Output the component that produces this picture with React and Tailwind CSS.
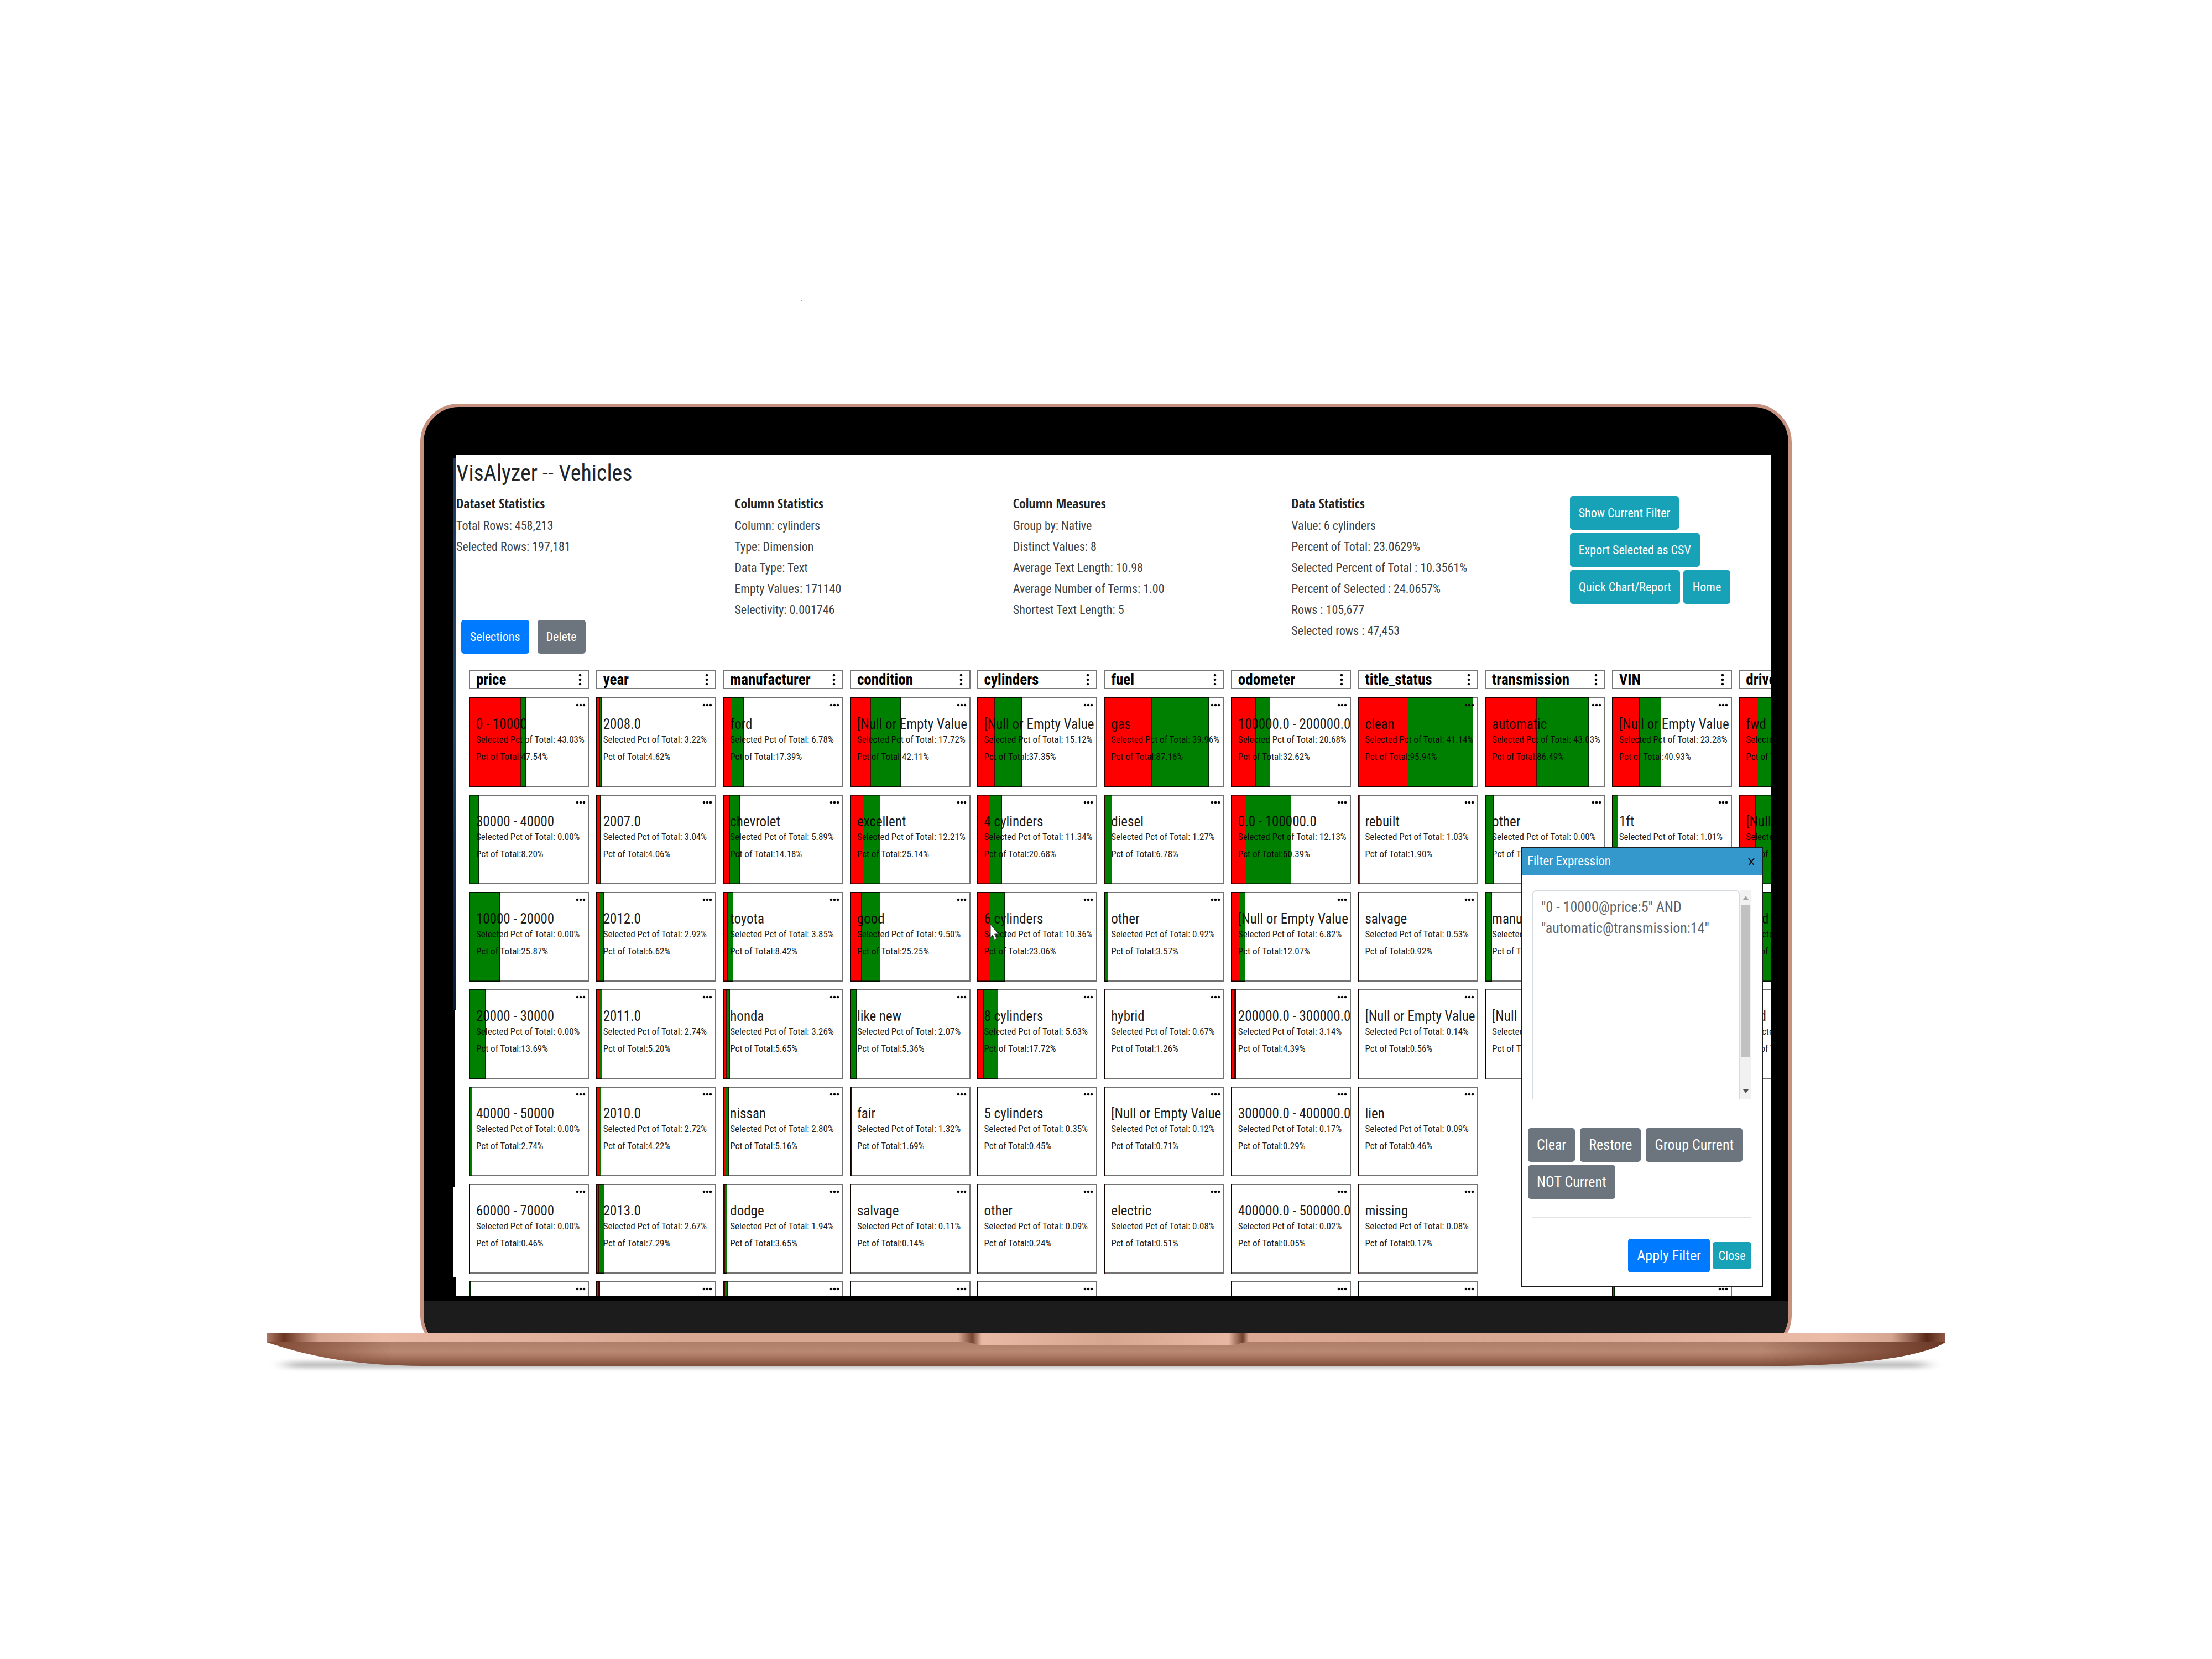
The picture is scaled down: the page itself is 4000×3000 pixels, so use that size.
import React from "react";

const NULL_NAME = "[Null or Empty Value";

// Each card: [value, selected share of total, share of total]
const columns = [
  {
    name: "price",
    cards: [
      ["0 - 10000", "43.03", "47.54"],
      ["30000 - 40000", "0.00", "8.20"],
      ["10000 - 20000", "0.00", "25.87"],
      ["20000 - 30000", "0.00", "13.69"],
      ["40000 - 50000", "0.00", "2.74"],
      ["60000 - 70000", "0.00", "0.46"],
      ["", "0.00", "1.30"],
    ],
  },
  {
    name: "year",
    cards: [
      ["2008.0", "3.22", "4.62"],
      ["2007.0", "3.04", "4.06"],
      ["2012.0", "2.92", "6.62"],
      ["2011.0", "2.74", "5.20"],
      ["2010.0", "2.72", "4.22"],
      ["2013.0", "2.67", "7.29"],
      ["", "2.60", "3.40"],
    ],
  },
  {
    name: "manufacturer",
    cards: [
      ["ford", "6.78", "17.39"],
      ["chevrolet", "5.89", "14.18"],
      ["toyota", "3.85", "8.42"],
      ["honda", "3.26", "5.65"],
      ["nissan", "2.80", "5.16"],
      ["dodge", "1.94", "3.65"],
      ["", "1.70", "4.10"],
    ],
  },
  {
    name: "condition",
    cards: [
      [NULL_NAME, "17.72", "42.11"],
      ["excellent", "12.21", "25.14"],
      ["good", "9.50", "25.25"],
      ["like new", "2.07", "5.36"],
      ["fair", "1.32", "1.69"],
      ["salvage", "0.11", "0.14"],
      ["", "0.00", "0.10"],
    ],
  },
  {
    name: "cylinders",
    cards: [
      [NULL_NAME, "15.12", "37.35"],
      ["4 cylinders", "11.34", "20.68"],
      ["6 cylinders", "10.36", "23.06"],
      ["8 cylinders", "5.63", "17.72"],
      ["5 cylinders", "0.35", "0.45"],
      ["other", "0.09", "0.24"],
      ["", "0.00", "0.10"],
    ],
  },
  {
    name: "fuel",
    cards: [
      ["gas", "39.96", "87.16"],
      ["diesel", "1.27", "6.78"],
      ["other", "0.92", "3.57"],
      ["hybrid", "0.67", "1.26"],
      [NULL_NAME, "0.12", "0.71"],
      ["electric", "0.08", "0.51"],
    ],
  },
  {
    name: "odometer",
    cards: [
      ["100000.0 - 200000.0", "20.68", "32.62"],
      ["0.0 - 100000.0", "12.13", "50.39"],
      [NULL_NAME, "6.82", "12.07"],
      ["200000.0 - 300000.0", "3.14", "4.39"],
      ["300000.0 - 400000.0", "0.17", "0.29"],
      ["400000.0 - 500000.0", "0.02", "0.05"],
      ["", "0.00", "0.03"],
    ],
  },
  {
    name: "title_status",
    cards: [
      ["clean", "41.14", "95.94"],
      ["rebuilt", "1.03", "1.90"],
      ["salvage", "0.53", "0.92"],
      [NULL_NAME, "0.14", "0.56"],
      ["lien", "0.09", "0.46"],
      ["missing", "0.08", "0.17"],
      ["", "0.00", "0.10"],
    ],
  },
  {
    name: "transmission",
    cards: [
      ["automatic", "43.03", "86.49"],
      ["other", "0.00", "7.20"],
      ["manual", "0.00", "6.10"],
      [NULL_NAME, "0.00", "0.21"],
    ],
  },
  {
    name: "VIN",
    cards: [
      [NULL_NAME, "23.28", "40.93"],
      ["1ft", "1.01", "5.20"],
      ["", "0.90", "2.90"],
      ["", "0.80", "2.80"],
      ["", "0.70", "2.70"],
      ["", "0.60", "2.60"],
      ["", "0.40", "2.60"],
    ],
  },
  {
    name: "drive",
    cards: [
      ["fwd", "15.50", "27.40"],
      [NULL_NAME, "14.20", "31.00"],
      ["4wd", "9.00", "32.00"],
      ["rwd", "4.00", "9.00"],
    ],
  },
];

const stats = [
  ["Dataset Statistics", ["Total Rows: 458,213", "Selected Rows: 197,181"]],
  [
    "Column Statistics",
    ["Column: cylinders", "Type: Dimension", "Data Type: Text", "Empty Values: 171140", "Selectivity: 0.001746"],
  ],
  [
    "Column Measures",
    [
      "Group by: Native",
      "Distinct Values: 8",
      "Average Text Length: 10.98",
      "Average Number of Terms: 1.00",
      "Shortest Text Length: 5",
    ],
  ],
  [
    "Data Statistics",
    [
      "Value: 6 cylinders",
      "Percent of Total: 23.0629%",
      "Selected Percent of Total : 10.3561%",
      "Percent of Selected : 24.0657%",
      "Rows : 105,677",
      "Selected rows : 47,453",
    ],
  ],
];

function Button({ className, children }) {
  return (
    <button type="button" className={"rounded-[5px] px-4 text-white whitespace-nowrap " + className}>
      {children}
    </button>
  );
}

function Stat({ title, lines, children }) {
  return (
    <section className="flex flex-col">
      <h2 className="mb-[3px] font-['Open_Sans_Condensed','Open_Sans',sans-serif] text-[24px] leading-[38px] font-bold text-[#212529]">
        {title}
      </h2>
      <ul className="text-[22px] leading-[38px] whitespace-nowrap text-[#3d4247]">
        {lines.map((l) => (
          <li key={l}>{l}</li>
        ))}
      </ul>
      {children}
    </section>
  );
}

function Pointer() {
  return (
    <svg className="absolute left-[23px] top-[57px] h-[32px] w-[16px]" viewBox="0 0 16 32" aria-hidden="true">
      <path
        d="M1 1 V26 L5 20.5 L8.5 29.5 L12 27.5 L8.7 19 H15 Z"
        fill="#fff"
        stroke="#333"
        strokeWidth="1"
      />
    </svg>
  );
}

function Card({ card, pointer }) {
  const [name, selected, total] = card;
  return (
    <article className="relative h-[162px] overflow-hidden whitespace-nowrap bg-white">
      <div
        className="absolute inset-y-0 left-0 border border-black/70 bg-[#008000]"
        style={{ width: total + "%" }}
      />
      {Number(selected) > 0 && (
        <div
          className="absolute inset-y-0 left-0 border border-black/70 bg-[#ff0000]"
          style={{ width: selected + "%" }}
        />
      )}
      <div className="absolute inset-0 border-2 border-black/55 border-l-black/80" />
      <button type="button" aria-label="Card menu" className="absolute right-[7px] top-[11px]">
        <svg className="h-[6px] w-[18px]" viewBox="0 0 18 6" aria-hidden="true">
          <circle cx="3" cy="3" r="2.3" />
          <circle cx="9" cy="3" r="2.3" />
          <circle cx="15" cy="3" r="2.3" />
        </svg>
      </button>
      {name && (
        <div className="relative pl-[13px] pt-[37px] text-black/90">
          <h4 className="text-[25px] leading-[24px]">{name}</h4>
          <p className="text-[17px] leading-[31px]">Selected Pct of Total: {selected}%</p>
          <p className="text-[17px] leading-[31px]">Pct of Total:{total}%</p>
        </div>
      )}
      {pointer && <Pointer />}
    </article>
  );
}

function Column({ column }) {
  return (
    <section className="flex min-w-0 flex-col gap-[14px]">
      <header className="mb-px flex h-[34px] items-center justify-between border-2 border-[#777] pl-[11px] pr-[12px]">
        <h3 className="text-[27px] leading-[30px] font-bold text-black">{column.name}</h3>
        <button type="button" aria-label={column.name + " menu"}>
          <svg className="h-[24px] w-[6px]" viewBox="0 0 6 24" aria-hidden="true">
            <circle cx="3" cy="4" r="2.3" />
            <circle cx="3" cy="12" r="2.3" />
            <circle cx="3" cy="20" r="2.3" />
          </svg>
        </button>
      </header>
      {column.cards.map((c, i) => (
        <Card key={i} card={c} pointer={c[0] === "6 cylinders"} />
      ))}
    </section>
  );
}

function FilterDialog() {
  return (
    <div
      role="dialog"
      aria-labelledby="filter-title"
      className="absolute bottom-[15px] right-[15px] flex w-[437px] flex-col border-2 border-[#1c1c1c] bg-white"
    >
      <header className="flex h-[50px] items-center justify-between bg-[#3498cd] pl-[9px] pr-[13px]">
        <h2 id="filter-title" className="text-[23px] leading-[46px] text-white">
          Filter Expression
        </h2>
        <button type="button" aria-label="Close dialog">
          <svg className="h-[15px] w-[12px]" viewBox="0 0 12 15" fill="none" stroke="#111" strokeWidth="2" aria-hidden="true">
            <path d="M1 1 L11 14 M11 1 L1 14" />
          </svg>
        </button>
      </header>
      <div className="ml-[18px] mr-[19px] mt-[27px] flex h-[377px]">
        <textarea
          aria-label="Filter expression"
          className="block min-w-0 flex-1 resize-none overflow-hidden rounded-t-[6px] border-2 border-b-0 border-[#d5dbe1] px-[14px] pt-[9px] text-[26px] leading-[38px] text-[#5c646c] outline-none"
          defaultValue={'"0 - 10000@price:5" AND\n"automatic@transmission:14"'}
        />
        <div className="flex w-[21px] flex-col items-center justify-between bg-[#f1f1f1] py-[10px]" aria-hidden="true">
          <svg className="h-[7px] w-[10px]" viewBox="0 0 10 7">
            <path d="M0 7 L5 0 L10 7 Z" fill="#a3a3a3" />
          </svg>
          <div className="mb-[59px] mt-[9px] w-[17px] flex-1 bg-[#c1c1c1]" />
          <svg className="h-[7px] w-[10px]" viewBox="0 0 10 7">
            <path d="M0 0 L5 7 L10 0 Z" fill="#505050" />
          </svg>
        </div>
      </div>
      <div className="mt-[53px] flex flex-wrap gap-x-[9px] gap-y-[6px] pl-[10px] pr-[20px]">
        <Button className="h-[61px] bg-[#6c757d] text-[26px]">Clear</Button>
        <Button className="h-[61px] bg-[#6c757d] text-[26px]">Restore</Button>
        <Button className="h-[61px] bg-[#6c757d] text-[26px]">Group Current</Button>
        <Button className="h-[61px] bg-[#6c757d] text-[26px]">NOT Current</Button>
      </div>
      <hr className="ml-[18px] mr-[19px] mt-[32px] border-t-2 border-[#e3e3e3]" />
      <footer className="mb-[25px] mr-[19px] mt-[38px] flex items-center justify-end gap-[5px]">
        <Button className="h-[61px] bg-[#007bff] text-[26px]">Apply Filter</Button>
        <button type="button" className="h-[49px] w-[70px] rounded-[5px] bg-[#17a2b8] text-[22px] text-white">
          Close
        </button>
      </footer>
    </div>
  );
}

function Screen() {
  return (
    <main className="relative aspect-[2378/1520] min-w-0 flex-1 overflow-hidden bg-white font-['Roboto_Condensed','Liberation_Sans',sans-serif]">
      <h1 className="mb-[2px] text-[40px] leading-[66px] text-[#212529]">VisAlyzer -- Vehicles</h1>
      <div className="grid min-h-[291px] grid-cols-[repeat(4,21.17%)_1fr]">
        {stats.map(([title, lines], i) => (
          <Stat key={title} title={title} lines={lines}>
            {i === 0 && (
              <div className="mt-auto flex gap-[15px] pl-[9px]">
                <Button className="h-[61px] bg-[#007bff] text-[22px]">Selections</Button>
                <Button className="h-[61px] bg-[#6c757d] text-[22px]">Delete</Button>
              </div>
            )}
          </Stat>
        ))}
        <div className="flex flex-wrap content-start gap-x-[6px] gap-y-[6px] pt-[6px]">
          <div className="w-full">
            <Button className="h-[61px] bg-[#17a2b8] text-[22px]">Show Current Filter</Button>
          </div>
          <div className="w-full">
            <Button className="h-[61px] bg-[#17a2b8] text-[22px]">Export Selected as CSV</Button>
          </div>
          <Button className="h-[61px] bg-[#17a2b8] text-[22px]">Quick Chart/Report</Button>
          <Button className="h-[61px] min-w-[85px] bg-[#17a2b8] text-[22px]">Home</Button>
        </div>
      </div>
      <div className="ml-[23px] mr-[-159px] mt-[30px] grid grid-cols-11 items-start gap-x-3">
        {columns.map((c) => (
          <Column key={c.name} column={c} />
        ))}
      </div>
      <FilterDialog />
    </main>
  );
}

function Base() {
  return (
    <svg className="relative block w-full" viewBox="0 0 3036 90" aria-hidden="true">
      <defs>
        <linearGradient id="body" x1="0" y1="0" x2="0" y2="1">
          <stop offset="0" stopColor="#b07e6a" />
          <stop offset=".4" stopColor="#b98974" />
          <stop offset=".6" stopColor="#ab7762" />
          <stop offset="1" stopColor="#7f4f3b" />
        </linearGradient>
        <linearGradient id="ends" gradientUnits="userSpaceOnUse" x1="0" y1="0" x2="3036" y2="0">
          <stop offset="0" stopColor="#7a432d" stopOpacity=".9" />
          <stop offset=".075" stopColor="#7a432d" stopOpacity="0" />
          <stop offset=".89" stopColor="#6b3825" stopOpacity="0" />
          <stop offset="1" stopColor="#6b3825" stopOpacity="1" />
        </linearGradient>
        <linearGradient id="top" gradientUnits="userSpaceOnUse" x1="0" y1="0" x2="3036" y2="0">
          <stop offset="0" stopColor="#ad7966" />
          <stop offset=".0105" stopColor="#693421" />
          <stop offset=".031" stopColor="#d5a592" />
          <stop offset=".07" stopColor="#ebbba8" />
          <stop offset=".25" stopColor="#d9a893" />
          <stop offset=".412" stopColor="#d9a893" />
          <stop offset=".4203" stopColor="#754330" />
          <stop offset=".426" stopColor="#eab9a6" />
          <stop offset=".5" stopColor="#d7a690" />
          <stop offset=".573" stopColor="#e8b7a3" />
          <stop offset=".5815" stopColor="#70402d" />
          <stop offset=".585" stopColor="#dba994" />
          <stop offset=".75" stopColor="#d9a893" />
          <stop offset=".93" stopColor="#ebbba8" />
          <stop offset=".968" stopColor="#d5a592" />
          <stop offset=".989" stopColor="#592817" />
          <stop offset="1" stopColor="#8f5a47" />
        </linearGradient>
        <filter id="soft" x="-5%" y="-200%" width="110%" height="500%">
          <feGaussianBlur stdDeviation="16 4" />
        </filter>
      </defs>
      <rect x="36" y="53" width="2964" height="10" fill="#000" opacity=".3" filter="url(#soft)" />
      <path d="M0 17 C70 40 150 60 290 60 H2721 C2880 60 3000 42 3036 17 Z" fill="url(#body)" />
      <path d="M0 17 C70 40 150 60 290 60 H2721 C2880 60 3000 42 3036 17 Z" fill="url(#ends)" />
      <path
        d="M0 0 H3036 V17 H1778 C1758 17 1756 23 1742 23 H1293 C1281 23 1279 17 1262 17 H0 Z"
        fill="url(#top)"
      />
      <path d="M0 16.5 H1262 M1778 16.5 H3036" stroke="#b98873" strokeWidth="1" />
    </svg>
  );
}

export default function App() {
  return (
    <div className="min-h-screen bg-white">
      <div className="h-[730px] pl-[36.2%] pt-[542px]">
        <div className="h-[3px] w-[3px] rounded-full bg-[#999]" />
      </div>
      <div className="mx-auto -mb-[38px] w-[62%] overflow-hidden rounded-[70px] border-6 border-[#c6917f] bg-black pt-[87px]">
        <div className="flex pl-[54px] pr-[31px]">
          <div className="flex w-[5px] flex-col items-end pt-[5px]" aria-hidden="true">
            <div className="w-full flex-[999] bg-gradient-to-b from-[#1c3a5e] via-[#234a6b] to-[#071a35]" />
            <div className="w-[3px] flex-[320] bg-white" />
            <div className="w-full flex-[163] bg-white" />
            <div className="w-full flex-[33]" />
          </div>
          <Screen />
        </div>
        <div className="mt-[10px] h-[89px] bg-[#1c1c1c]" />
      </div>
      <div className="mx-auto w-[75.9%]">
        <Base />
      </div>
    </div>
  );
}
